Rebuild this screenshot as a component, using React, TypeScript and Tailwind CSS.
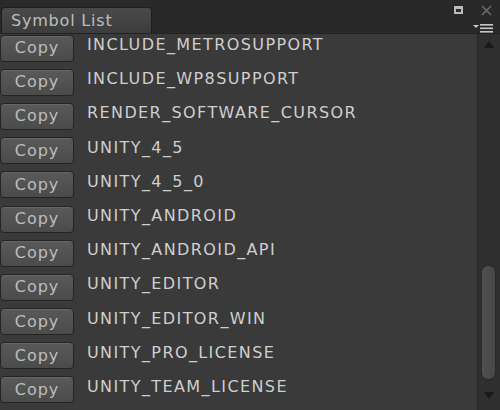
import React from "react"

const symbols = [
  "INCLUDE_METROSUPPORT",
  "INCLUDE_WP8SUPPORT",
  "RENDER_SOFTWARE_CURSOR",
  "UNITY_4_5",
  "UNITY_4_5_0",
  "UNITY_ANDROID",
  "UNITY_ANDROID_API",
  "UNITY_EDITOR",
  "UNITY_EDITOR_WIN",
  "UNITY_PRO_LICENSE",
  "UNITY_TEAM_LICENSE",
]

export default function App() {
  return (
    <div
      className="w-[500px] h-[410px] flex flex-col bg-[#3a3a3a] overflow-hidden"
      style={{ fontFamily: '"DejaVu Sans", Verdana, sans-serif' }}
    >
      {/* tab bar */}
      <div className="h-[34px] flex items-end bg-[#292929] relative shrink-0 border-b border-[#222]">
        <div className="ml-[1px] w-[151px] h-[26px] rounded-t-[4px] bg-gradient-to-b from-[#4a4a4a] to-[#3c3c3c] border border-b-0 border-[#1e1e1e] flex items-center pl-[9px] text-[16px] text-[#bdbdbd] tracking-[0.8px]">
          Symbol List
        </div>
        <div className="absolute left-[454px] top-[6px] w-[9px] h-[8px] bg-[#bcbcbc] flex items-center justify-center">
          <div className="w-[5px] h-[3px] bg-[#2b2b2b]" />
        </div>
        <svg className="absolute left-[481px] top-[5px]" width="11" height="11" viewBox="0 0 11 11">
          <path d="M1 1L10 10M10 1L1 10" stroke="#6b6b6b" strokeWidth="1.6" />
        </svg>
        <svg className="absolute left-[473px] top-[24px]" width="21" height="9" viewBox="0 0 21 9">
          <path d="M0 1H6L3 4Z" fill="#c9c9c9" />
          <rect x="7" y="0" width="13" height="1.6" fill="#c9c9c9" />
          <rect x="7" y="3.5" width="13" height="1.6" fill="#c9c9c9" />
          <rect x="7" y="7" width="13" height="1.6" fill="#c9c9c9" />
        </svg>
      </div>

      <div className="flex flex-1 min-h-0">
        {/* list */}
        <div className="flex-1 overflow-hidden">
          <div className="flex flex-col -mt-[6px]">
            {symbols.map((s) => (
              <div key={s} className="h-[34.2px] shrink-0 flex items-center">
                <button className="w-[74px] h-[27px] mt-[6px] rounded-[4px] border border-[#242424] bg-gradient-to-b from-[#595959] to-[#4b4b4b] shadow-[inset_0_1px_0_rgba(255,255,255,0.08)] text-[16px] text-[#bdbdbd] tracking-[1px] flex items-center justify-center">
                  Copy
                </button>
                <span className="ml-[13px] text-[16px] text-[#cfcfcf] tracking-[1.4px]">{s}</span>
              </div>
            ))}
          </div>
        </div>

        {/* scrollbar */}
        <div className="w-[23px] bg-[#2f2f2f] border-l border-[#272727] relative flex flex-col items-center">
          <svg className="mt-[7px]" width="10" height="7" viewBox="0 0 10 7">
            <path d="M5 0L10 7H0Z" fill="#1a1a1a" />
          </svg>
          <div className="flex-1" />
          <div className="absolute left-[3px] top-[231px] w-[15px] h-[115px] rounded-full bg-gradient-to-r from-[#505050] to-[#474747] border border-[#2a2a2a]" />
          <svg className="mb-[11px]" width="10" height="7" viewBox="0 0 10 7">
            <path d="M0 0H10L5 7Z" fill="#1a1a1a" />
          </svg>
        </div>
      </div>
    </div>
  )
}
